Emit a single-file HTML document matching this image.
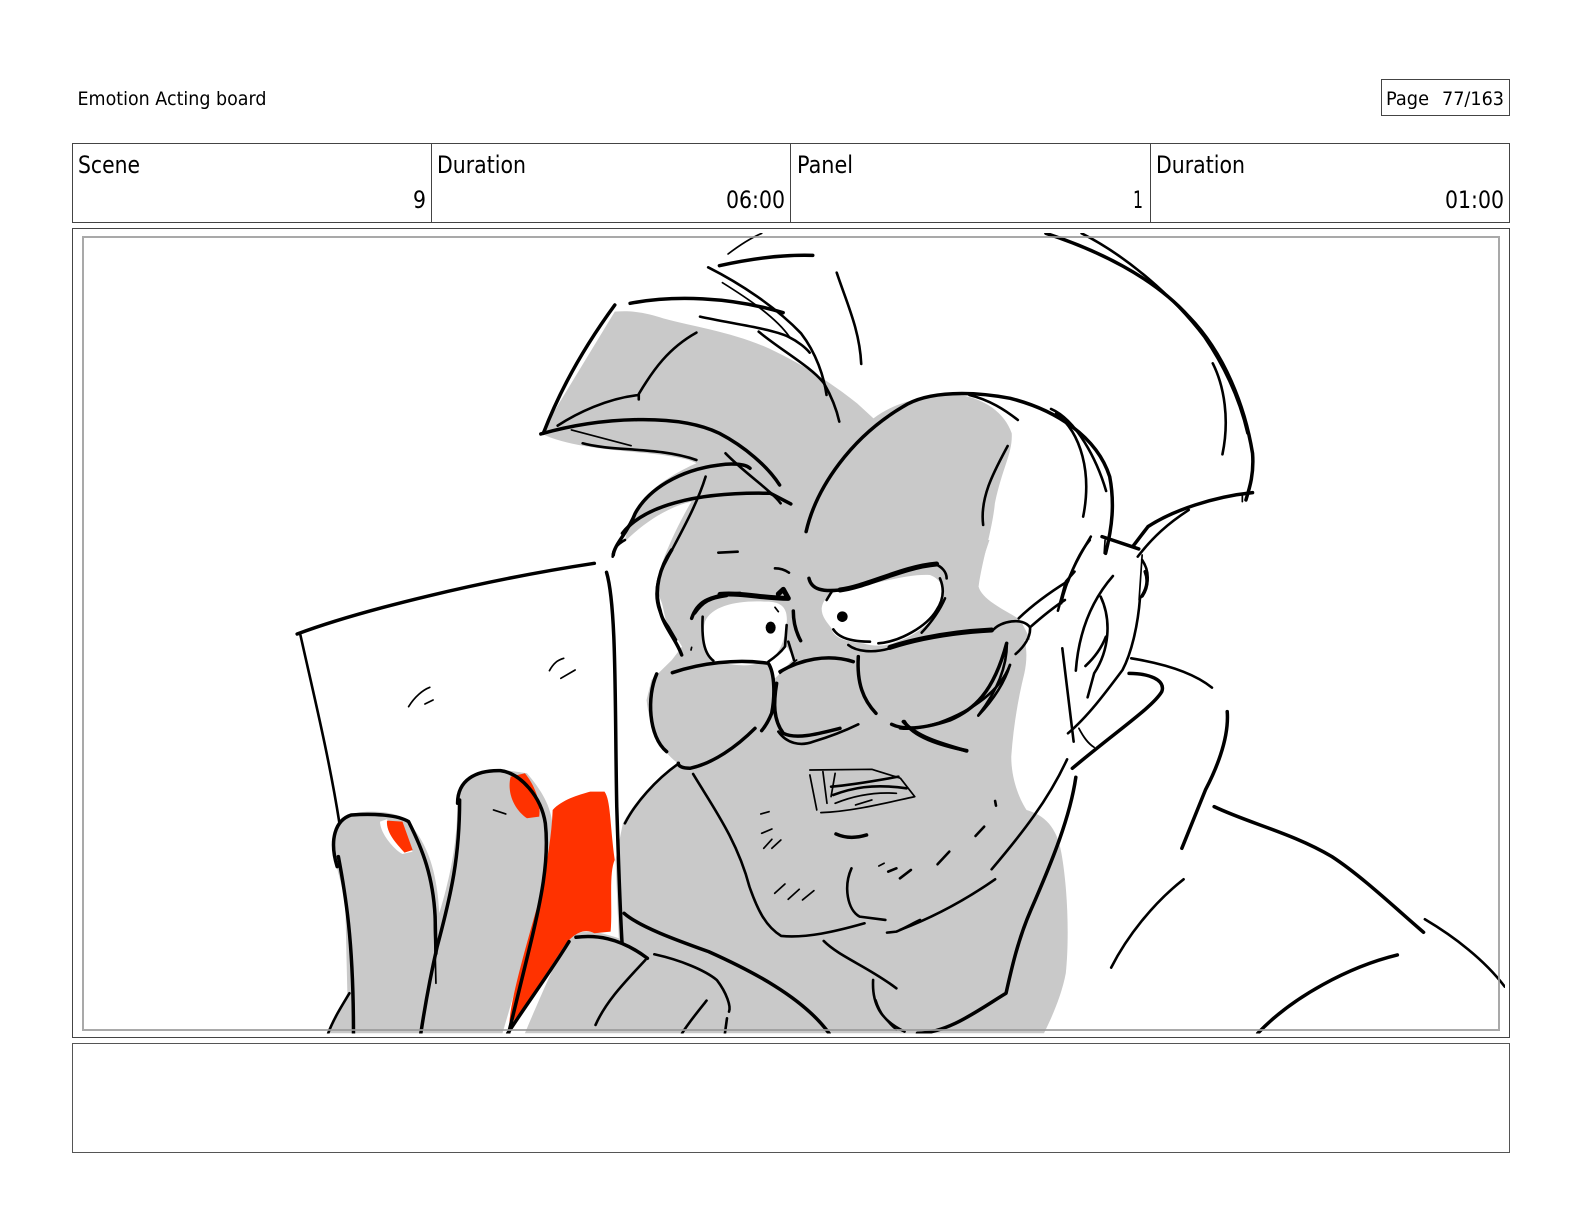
<!DOCTYPE html>
<html><head><meta charset="utf-8"><title>Emotion Acting board</title>
<style>
html,body{margin:0;padding:0;background:#fff}
svg{display:block}
text{font-family:"DejaVu Sans","Liberation Sans",sans-serif;fill:#000}
.s path,.s circle,.s ellipse{vector-effect:non-scaling-stroke}
.s path{fill:none;stroke:#000;stroke-width:2.6;stroke-linecap:round;stroke-linejoin:round}
.s path.k{stroke-width:3.5}
.s path.t{stroke-width:1.7}
.s path.b{stroke-width:5}
</style></head><body>
<svg width="1584" height="1224" viewBox="0 0 1584 1224" xmlns="http://www.w3.org/2000/svg">
<defs><clipPath id="c"><rect x="76" y="233" width="1429" height="800.5"/></clipPath></defs>
<rect width="1584" height="1224" fill="#fff"/>

<text x="77.5" y="105" font-size="19" textLength="189" lengthAdjust="spacingAndGlyphs">Emotion Acting board</text>
<rect x="1381.5" y="79.5" width="128" height="36" fill="none" stroke="#444"/>
<text x="1386" y="105" font-size="19" textLength="43" lengthAdjust="spacingAndGlyphs">Page</text>
<text x="1442" y="105" font-size="19" textLength="62" lengthAdjust="spacingAndGlyphs">77/163</text>

<rect x="72.5" y="143.5" width="1437" height="79" fill="none" stroke="#444"/>
<path d="M431.5 143V223M790.5 143V223M1150.5 143V223" stroke="#444" fill="none"/>
<text x="78" y="173" font-size="24" textLength="62" lengthAdjust="spacingAndGlyphs">Scene</text>
<text x="437" y="173" font-size="24" textLength="89" lengthAdjust="spacingAndGlyphs">Duration</text>
<text x="797" y="173" font-size="24" textLength="56" lengthAdjust="spacingAndGlyphs">Panel</text>
<text x="1156" y="173" font-size="24" textLength="89" lengthAdjust="spacingAndGlyphs">Duration</text>
<text x="413" y="208" font-size="24" textLength="13" lengthAdjust="spacingAndGlyphs">9</text>
<text x="726" y="208" font-size="24" textLength="59" lengthAdjust="spacingAndGlyphs">06:00</text>
<text x="1133" y="208" font-size="24" textLength="10" lengthAdjust="spacingAndGlyphs">1</text>
<text x="1445" y="208" font-size="24" textLength="59" lengthAdjust="spacingAndGlyphs">01:00</text>

<rect x="72.5" y="228.5" width="1437" height="809" fill="none" stroke="#444"/>
<rect x="72.5" y="1043.5" width="1437" height="109" fill="none" stroke="#555"/>

<g clip-path="url(#c)" class="s">
  <!-- fills -->
  <g transform="translate(500,220) scale(.5102,.3333)">
    <path style="fill:#c9c9c9;stroke:none" d="M80,640 L225,275 C260,270 290,280 320,295 C380,320 470,340 540,395 C600,440 650,490 700,550 L732,595 C780,540 840,525 900,525 C950,535 990,580 1003,640 C1005,700 985,740 970,850 C965,930 945,1020 938,1100 C945,1140 990,1170 1020,1200 L1040,1260 L345,1260 L305,1100 C310,1050 335,950 375,845 C330,860 280,910 245,965 C250,900 280,820 330,775 C350,755 370,740 385,730 C370,715 320,705 290,700 C220,690 130,680 80,640 Z"/>
  </g>
  <g transform="translate(280,540) scale(.4082,.3333)">
    <path style="fill:#c9c9c9;stroke:none" d="M120,1480 L165,1360 L160,1100 C150,1000 125,960 130,890 C135,840 170,815 220,815 C270,815 310,825 330,870 C360,920 385,990 390,1120 C420,1000 435,900 435,770 C440,710 490,685 540,688 L605,700 C640,750 665,800 668,860 C660,1000 640,1100 600,1250 L545,1480 Z"/>
    <path style="fill:#c9c9c9;stroke:none" d="M600,1480 C620,1420 660,1310 700,1200 C730,1165 770,1170 830,1195 L822,960 L840,850 C870,780 920,720 975,670 C930,630 905,560 898,480 L910,420 L960,360 L985,320 L945,240 L925,130 L975,0 L1568,0 L1568,1480 Z"/>
    <path style="fill:#ff3200;stroke:none" d="M668,810 C690,780 730,765 760,755 L795,755 C810,780 808,850 820,960 C805,1000 815,1100 810,1175 L770,1180 C740,1160 710,1190 690,1230 L610,1380 L562,1460 C560,1400 600,1230 630,1100 C650,1000 665,900 668,810 Z"/>
    <path style="fill:#ff3200;stroke:none" d="M565,710 L600,700 C620,730 640,780 635,830 L605,835 C575,810 555,760 565,710 Z"/>
    <path style="fill:#fff;stroke:none" d="M245,845 C245,880 280,930 300,942 L325,935 L262,838 Z"/>
    <path style="fill:#ff3200;stroke:none" d="M262,842 L300,845 L325,930 L305,938 C285,910 260,880 262,842 Z"/>
  </g>
  <g transform="translate(900,540) scale(.4363,.3333)">
    <path style="fill:#c9c9c9;stroke:none" d="M0,0 L205,0 C190,60 175,110 180,160 C190,190 230,200 260,240 C290,280 295,340 285,400 C270,480 260,560 255,650 C255,710 270,770 290,810 C330,825 360,860 370,940 C385,1050 388,1200 380,1300 C370,1370 345,1440 330,1480 L0,1480 Z"/>
  </g>
  <g transform="translate(640,550) scale(.3333)">
    <path style="fill:#fff;stroke:none" d="M195,215 C215,165 300,150 380,155 C420,155 445,170 440,220 C435,270 420,310 385,335 L330,345 C290,350 230,335 215,330 C190,300 185,250 195,215 Z"/>
    <path style="fill:#fff;stroke:none" d="M545,175 C550,140 580,125 610,120 C700,105 800,70 870,75 C910,90 920,130 905,165 C885,215 820,260 770,275 C740,290 700,290 670,280 C620,275 580,265 575,235 C560,215 545,200 545,175 Z"/>
    <path style="fill:#fff;stroke:none" d="M385,335 L440,290 L462,325 L420,370 L405,385 Z"/>
  </g>

  <!-- upper hair and head -->
  <g transform="translate(500,220) scale(.5102,.3333)">
    <path class="t" d="M447,102 C470,75 490,55 513,40"/>
    <path class="k" d="M430,137 C480,120 550,103 613,106"/>
    <path d="M408,142 C470,190 540,260 590,340 C620,400 635,470 640,525"/>
    <path class="t" d="M436,188 C480,230 540,290 567,350"/>
    <path class="k" d="M255,250 C340,225 450,230 555,278"/>
    <path d="M392,290 C450,310 530,325 565,350 C585,365 600,385 607,398"/>
    <path d="M507,335 C550,390 610,440 635,490 C650,530 660,570 665,605"/>
    <path d="M660,158 C680,250 705,330 708,432"/>
    <path class="k" d="M225,255 C170,370 120,500 85,640"/>
    <path d="M385,338 C330,385 300,450 272,522 L272,538"/>
    <path d="M272,525 C210,535 150,580 113,617"/>
    <path class="k" d="M80,642 C200,590 350,580 430,640 C480,680 525,740 548,795"/>
    <path class="t" d="M140,630 L257,677"/>
    <path d="M162,670 C220,695 310,680 385,720"/>
    <path d="M442,700 C480,760 530,810 550,850"/>
    <path class="k" d="M222,1005 C225,970 250,940 265,880 C290,810 350,750 430,735 C450,730 480,730 490,745"/>
    <path class="k" d="M240,940 C280,860 380,815 530,820 L570,852"/>
    <path d="M403,770 C385,860 350,950 320,1040 C295,1120 310,1180 330,1220 L345,1260"/>
    <path class="k" d="M600,935 C620,800 690,650 790,560 C840,510 930,515 1000,535 C1090,570 1170,650 1195,770 C1205,850 1200,920 1187,1000"/>
    <path d="M920,525 C960,540 990,570 1015,600"/>
    <path d="M1080,567 C1130,600 1170,720 1188,813"/>
    <path d="M1090,580 C1140,640 1160,760 1143,890"/>
    <path d="M995,678 C970,750 940,830 947,915"/>
    <path class="k" d="M1070,40 C1170,90 1280,170 1350,290 C1420,400 1460,560 1475,700 C1478,760 1470,800 1462,840"/>
    <path d="M1140,40 C1230,110 1320,230 1380,350 C1420,440 1450,540 1465,640"/>
    <path d="M1397,430 C1420,500 1430,600 1416,703"/>
    <path class="k" d="M1475,818 C1400,830 1320,870 1270,920 L1240,980"/>
    <path class="t" d="M1455,845 L1455,820"/>
    <path d="M1350,870 C1310,910 1280,950 1250,1010"/>
    <path class="k" d="M1180,950 L1252,987"/>
    <path d="M1158,950 C1130,1020 1110,1080 1100,1150"/>
  </g>

  <!-- paper, hand, chin -->
  <g transform="translate(280,540) scale(.4082,.3333)">
    <path class="k" d="M42,282 C200,210 500,120 770,70"/>
    <path d="M50,285 C80,450 120,650 145,845"/>
    <path class="k" d="M800,97 C825,200 820,500 825,800 C830,1000 835,1150 838,1210"/>
    <path d="M815,50 C815,25 830,10 845,0"/>
    <path class="t" d="M315,500 C330,470 350,450 367,442"/>
    <path class="t" d="M355,492 L375,480"/>
    <path class="t" d="M660,392 C670,370 680,360 695,355"/>
    <path class="t" d="M688,415 L723,390"/>
    <path class="k" d="M140,980 C120,900 135,840 175,825 C230,820 290,825 315,845 C350,930 375,1010 380,1130 L382,1240"/>
    <path class="k" d="M143,950 C160,1060 180,1200 180,1480"/>
    <path d="M170,1360 C150,1400 130,1440 118,1480"/>
    <path class="k" d="M435,790 C435,720 480,690 540,692 C590,700 640,770 650,850 C660,960 640,1080 610,1230 L560,1480"/>
    <path class="k" d="M440,780 C440,950 420,1060 385,1220 C370,1300 355,1400 345,1480"/>
    <path class="t" d="M378,1130 L382,1330"/>
    <path class="t" d="M523,810 L553,822"/>
    <path class="k" d="M708,1205 C660,1300 600,1400 558,1480"/>
    <path class="k" d="M725,1192 C770,1185 830,1190 900,1255"/>
    <path class="k" d="M843,1120 C880,1160 970,1200 1050,1235 C1150,1290 1280,1370 1345,1480"/>
    <path d="M895,1260 C850,1320 800,1380 773,1455"/>
    <path d="M917,1243 C980,1260 1040,1290 1070,1320 C1095,1360 1105,1400 1100,1415"/>
    <path d="M1045,1382 C1020,1420 1000,1450 985,1480"/>
    <path d="M1095,1435 L1090,1480"/>
    <path d="M845,850 C870,790 920,720 975,672"/>
    <path class="t" d="M1298,690 L1450,688 C1480,700 1510,710 1520,715 L1555,770 C1480,790 1400,815 1325,818"/>
    <path class="t" d="M1298,705 L1315,810"/>
    <path class="t" d="M1330,695 L1340,790"/>
    <path class="t" d="M1360,700 L1350,770"/>
    <path d="M1350,740 C1400,735 1470,720 1515,710"/>
    <path d="M1355,765 C1400,745 1450,730 1535,745"/>
    <path class="t" d="M1360,790 C1400,770 1450,755 1510,760"/>
    <path class="t" d="M1410,795 L1450,780"/>
    <path class="k" d="M1362,882 C1385,895 1410,895 1437,885"/>
    <path d="M1012,702 C1060,800 1120,900 1150,1040 C1170,1110 1190,1160 1228,1188 C1290,1195 1360,1175 1432,1150"/>
    <path d="M1400,985 C1380,1040 1390,1110 1420,1130 L1483,1140"/>
    <path d="M1487,1178 L1510,1175 C1530,1165 1550,1150 1568,1140"/>
    <path class="t" d="M1178,822 L1198,815"/><path class="t" d="M1180,880 L1205,867"/>
    <path class="t" d="M1185,925 L1205,898"/><path class="t" d="M1205,925 L1227,900"/>
    <path class="t" d="M1212,1060 L1237,1032"/><path class="t" d="M1245,1078 L1272,1048"/><path class="t" d="M1280,1080 L1308,1052"/>
    <path class="t" d="M1467,978 L1480,970"/><path d="M1490,995 L1510,985"/><path class="t" d="M1518,1015 L1545,990"/>
    <path d="M1332,1203 C1370,1250 1440,1280 1510,1345"/>
    <path d="M1453,1320 C1450,1390 1470,1440 1530,1475"/>
    <path class="t" d="M1460,1380 C1470,1420 1490,1450 1510,1470"/>
  </g>

  <!-- ear, neck, shoulder -->
  <g transform="translate(900,540) scale(.4363,.3333)">
    <path d="M555,60 C575,100 570,140 550,175 C545,260 530,340 510,390 C470,460 430,530 385,580"/>
    <path class="k" d="M562,95 C570,120 566,145 555,168"/>
    <path class="t" d="M555,45 L548,180"/>
    <path class="t" d="M470,0 L468,40"/>
    <path d="M488,108 C440,180 410,270 403,392"/>
    <path d="M460,170 C485,240 480,330 445,400 L430,472"/>
    <path d="M472,290 C460,330 440,360 425,378"/>
    <path d="M372,325 L398,605"/>
    <path class="t" d="M410,565 C420,590 430,610 445,622"/>
    <path d="M530,355 C600,370 670,395 715,443"/>
    <path class="k" d="M525,400 C570,400 610,420 600,455 C580,500 500,570 395,685"/>
    <path d="M383,658 C340,780 280,880 210,988"/>
    <path class="k" d="M403,712 C390,830 350,960 300,1110 C270,1200 255,1290 243,1360 C180,1410 110,1480 40,1480"/>
    <path class="k" d="M750,515 C755,600 720,700 700,750 L646,925"/>
    <path class="k" d="M720,800 C800,850 900,880 990,950 C1060,1010 1140,1110 1200,1177"/>
    <path d="M1203,1138 C1270,1190 1340,1260 1386,1340"/>
    <path d="M650,1018 C580,1090 520,1190 484,1283"/>
    <path class="k" d="M1140,1245 C1030,1280 900,1370 820,1480"/>
    <path d="M218,1018 C150,1080 80,1130 0,1170"/>
    <path d="M218,783 L220,797"/><path d="M193,860 L173,888"/><path d="M113,935 L86,973"/><path d="M25,990 L0,1015"/>
    <path d="M383,125 C340,160 300,200 272,235"/>
    <path d="M378,180 C360,195 330,225 298,262"/>
    <path d="M400,95 L380,125 L362,212"/>
    <path d="M215,268 C230,245 280,230 298,262 C300,290 285,320 265,342"/>
    <path d="M245,310 C245,370 230,440 180,525"/>
    <path d="M252,375 C230,450 170,510 90,548 C60,560 30,570 0,565"/>
    <path class="k" d="M10,545 C30,590 90,615 153,632"/>
    <path d="M435,0 C410,40 395,90 385,125"/>
  </g>

  <!-- facial features -->
  <g transform="translate(640,550) scale(.3333)">
    <path class="k" d="M95,0 C60,50 40,120 60,180 C70,230 110,270 125,315"/>
    <path d="M235,8 L293,5"/>
    <path d="M405,55 C420,55 435,60 447,68"/>
    <path class="k" d="M155,205 C170,160 200,135 300,130"/>
    <path class="b" d="M240,133 C310,128 370,145 445,145 L430,118 L415,132"/>
    <path d="M165,190 C190,155 210,145 260,138"/>
    <path d="M188,200 C185,260 190,310 220,332"/>
    <ellipse cx="392" cy="233" rx="15" ry="18" fill="#000"/>
    <ellipse cx="607" cy="200" rx="16" ry="16" fill="#000"/>
    <path class="t" d="M405,172 L415,185"/>
    <path class="t" d="M155,292 L153,300"/>
    <path d="M440,225 L435,290 C420,310 400,325 385,335"/>
    <path class="k" d="M460,183 C460,220 470,250 482,272"/>
    <path d="M445,275 L462,330"/>
    <path class="t" d="M420,370 L470,330"/>
    <path class="k" d="M97,368 C180,340 290,325 385,340 C405,370 405,440 395,490 C385,515 375,530 365,542"/>
    <path class="k" d="M50,372 C20,440 25,560 80,605"/>
    <path class="k" d="M345,535 C290,590 220,640 150,655 C130,655 115,650 115,640"/>
    <path class="k" d="M420,365 C480,330 560,310 640,335"/>
    <path class="k" d="M410,400 C400,460 400,510 430,550 C470,570 540,550 600,535"/>
    <path d="M415,545 C440,580 480,590 520,575 C570,560 620,540 655,523"/>
    <path class="k" d="M655,320 C650,400 670,450 708,490"/>
    <path class="k" d="M755,523 C800,545 870,530 930,510 C1000,480 1060,430 1100,280"/>
    <path d="M1110,345 C1090,410 1050,460 1015,497"/>
    <path class="k" d="M790,515 C830,560 900,580 980,603"/>
    <path d="M625,285 C650,305 700,310 750,295"/>
    <path class="b" d="M750,292 C850,260 960,245 1055,240"/>
    <path class="k" d="M507,85 C515,120 550,125 600,120"/>
    <path class="b" d="M600,120 C680,110 790,50 890,42"/>
    <path d="M885,42 C905,50 920,65 920,85"/>
    <path d="M560,150 L575,125"/>
    <path d="M580,238 C600,270 650,275 690,275"/>
    <path d="M715,280 C780,275 860,230 890,180 C910,150 915,120 900,85"/>
    <path d="M845,248 C880,210 900,180 915,145"/>
  </g>
</g>

<rect x="83" y="237" width="1416" height="793" fill="none" stroke="#9a9a9a" stroke-opacity=".85" stroke-width="2"/>
</svg>
</body></html>
